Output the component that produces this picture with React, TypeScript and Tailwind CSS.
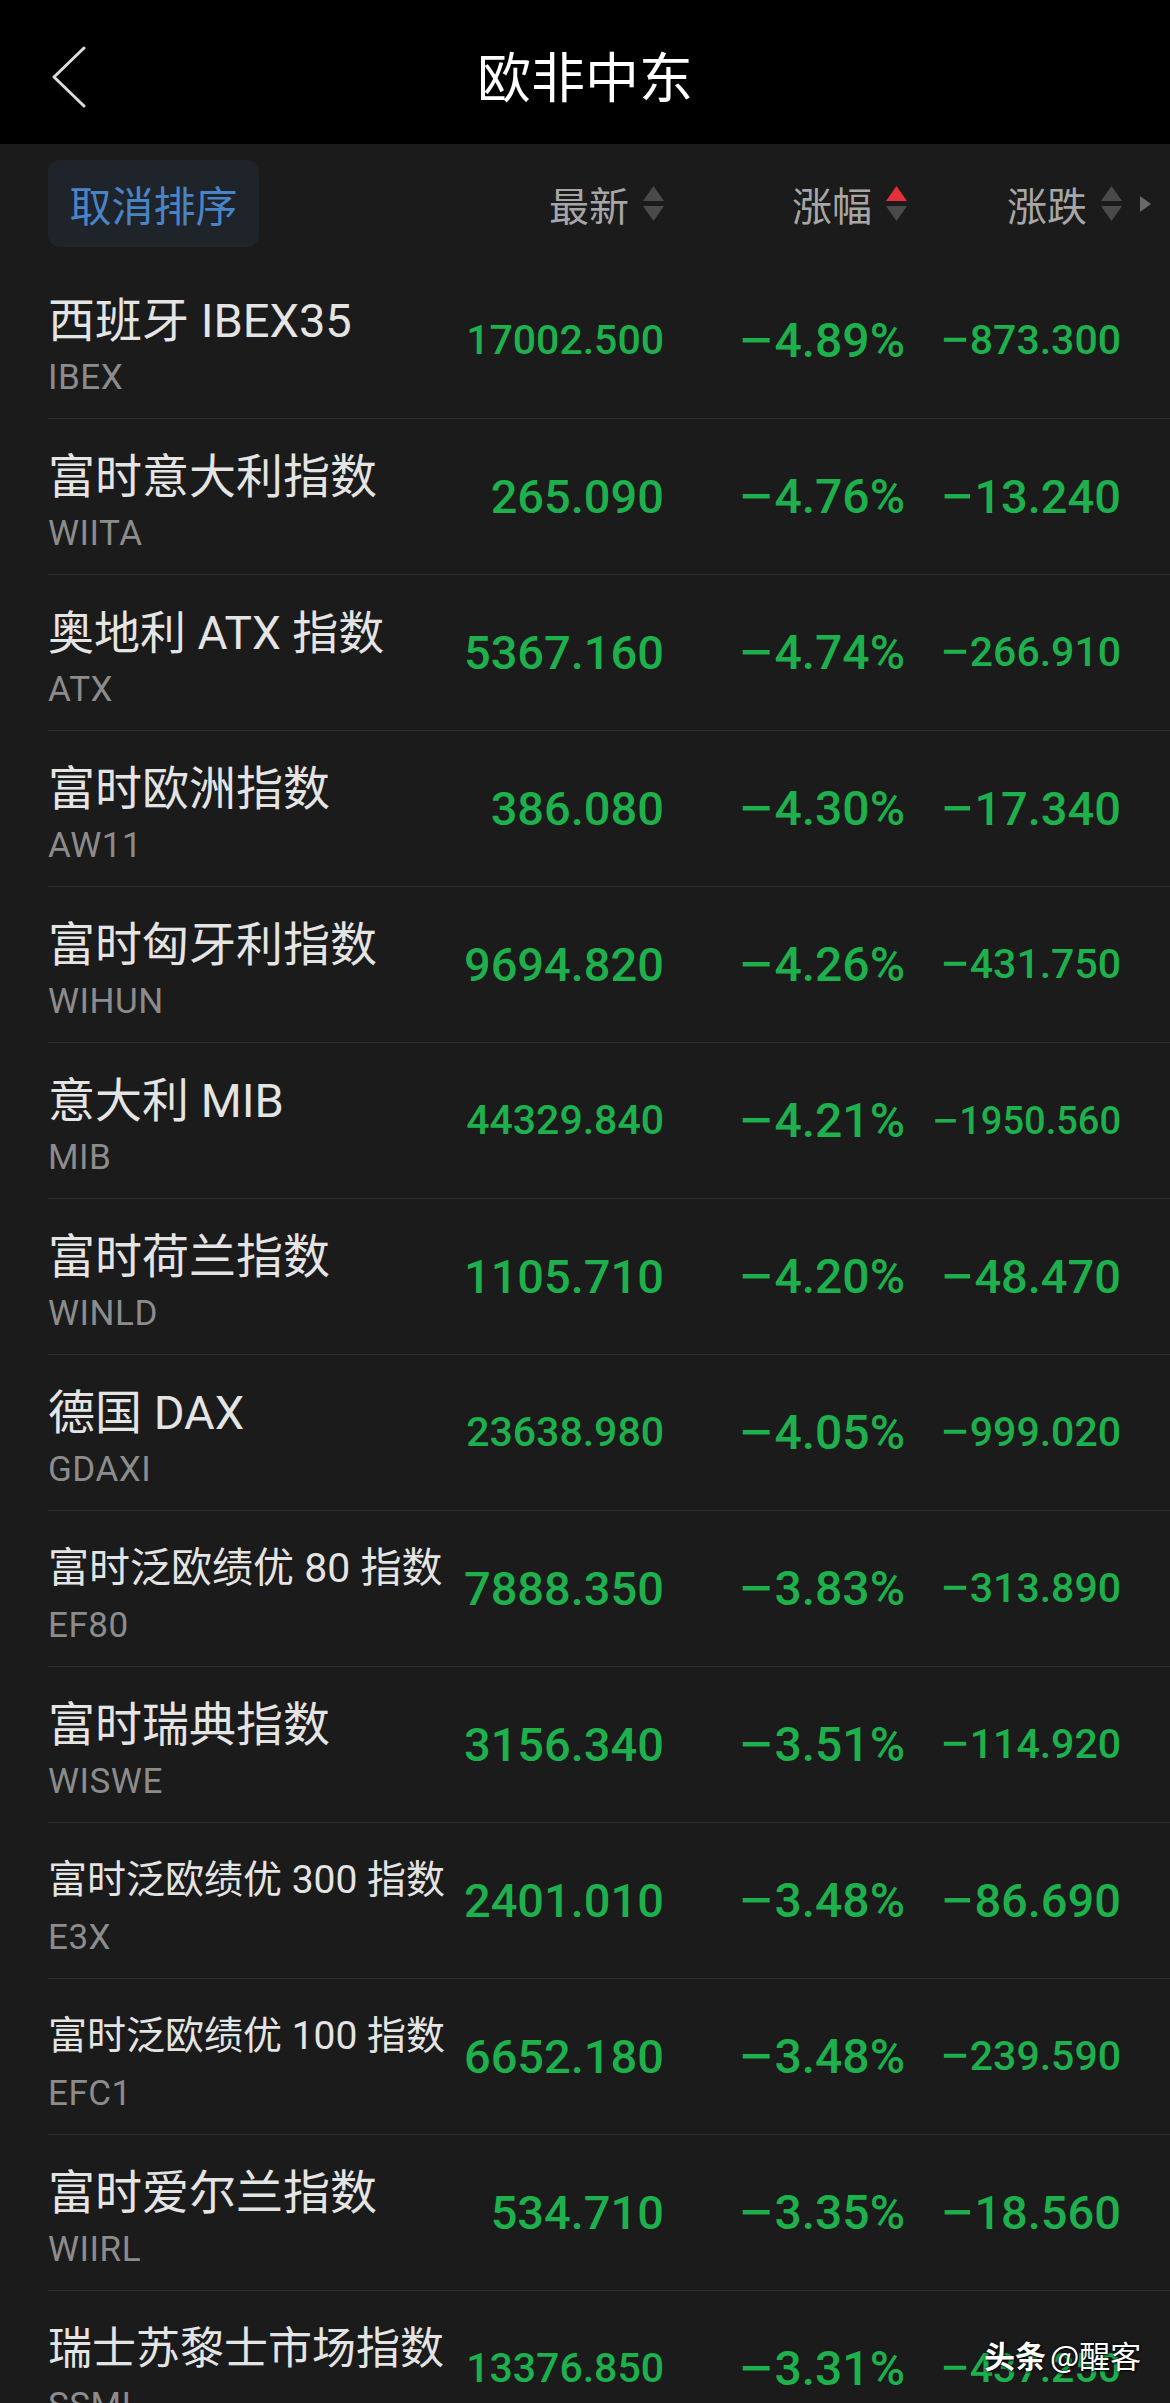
import React from 'react';

type Row = {
  name: string;
  nameCls: string;
  code: string;
  last: string;
  lastCls: string;
  pct: string;
  chg: string;
  chgCls: string;
};

const rows: Row[] = [
  { name: '西班牙 IBEX35', nameCls: 'text-[47px]', code: 'IBEX', last: '17002.500', lastCls: 'text-[41px]', pct: '4.89%', chg: '873.300', chgCls: 'text-[41px]' },
  { name: '富时意大利指数', nameCls: 'text-[47px]', code: 'WIITA', last: '265.090', lastCls: 'text-[47px]', pct: '4.76%', chg: '13.240', chgCls: 'text-[47px]' },
  { name: '奥地利 ATX 指数', nameCls: 'text-[46px]', code: 'ATX', last: '5367.160', lastCls: 'text-[47px]', pct: '4.74%', chg: '266.910', chgCls: 'text-[41px]' },
  { name: '富时欧洲指数', nameCls: 'text-[47px]', code: 'AW11', last: '386.080', lastCls: 'text-[47px]', pct: '4.30%', chg: '17.340', chgCls: 'text-[47px]' },
  { name: '富时匈牙利指数', nameCls: 'text-[47px]', code: 'WIHUN', last: '9694.820', lastCls: 'text-[47px]', pct: '4.26%', chg: '431.750', chgCls: 'text-[41px]' },
  { name: '意大利 MIB', nameCls: 'text-[47px]', code: 'MIB', last: '44329.840', lastCls: 'text-[41px]', pct: '4.21%', chg: '1950.560', chgCls: 'text-[38px]' },
  { name: '富时荷兰指数', nameCls: 'text-[47px]', code: 'WINLD', last: '1105.710', lastCls: 'text-[47px]', pct: '4.20%', chg: '48.470', chgCls: 'text-[47px]' },
  { name: '德国 DAX', nameCls: 'text-[47px]', code: 'GDAXI', last: '23638.980', lastCls: 'text-[41px]', pct: '4.05%', chg: '999.020', chgCls: 'text-[41px]' },
  { name: '富时泛欧绩优 80 指数', nameCls: 'text-[41px]', code: 'EF80', last: '7888.350', lastCls: 'text-[47px]', pct: '3.83%', chg: '313.890', chgCls: 'text-[41px]' },
  { name: '富时瑞典指数', nameCls: 'text-[47px]', code: 'WISWE', last: '3156.340', lastCls: 'text-[47px]', pct: '3.51%', chg: '114.920', chgCls: 'text-[41px]' },
  { name: '富时泛欧绩优 300 指数', nameCls: 'text-[39px]', code: 'E3X', last: '2401.010', lastCls: 'text-[47px]', pct: '3.48%', chg: '86.690', chgCls: 'text-[47px]' },
  { name: '富时泛欧绩优 100 指数', nameCls: 'text-[39px]', code: 'EFC1', last: '6652.180', lastCls: 'text-[47px]', pct: '3.48%', chg: '239.590', chgCls: 'text-[41px]' },
  { name: '富时爱尔兰指数', nameCls: 'text-[47px]', code: 'WIIRL', last: '534.710', lastCls: 'text-[47px]', pct: '3.35%', chg: '18.560', chgCls: 'text-[47px]' },
  { name: '瑞士苏黎士市场指数', nameCls: 'text-[44px]', code: 'SSMI', last: '13376.850', lastCls: 'text-[41px]', pct: '3.31%', chg: '437.250', chgCls: 'text-[41px]' },
];

function SortArrows({ upActive = false }: { upActive?: boolean }) {
  return (
    <svg width="21" height="35" viewBox="0 0 21 35" className="ml-[14px] shrink-0">
      <polygon points="0,15 10.5,0 21,15" fill={upActive ? '#e3303a' : '#4a4a4a'} />
      <polygon points="0,20 21,20 10.5,35" fill="#4a4a4a" />
    </svg>
  );
}

export default function App() {
  return (
    <div className="relative h-[2403px] w-[1170px] overflow-hidden bg-[#1b1b1b] font-['Roboto','Noto_Sans_CJK_SC',sans-serif]">
      {/* Top nav */}
      <div className="grid h-[144px] grid-cols-[1fr_auto_1fr] items-center bg-black">
        <div className="flex items-center">
          <svg width="36" height="62" viewBox="0 0 36 62" className="ml-[51px] mt-[10px]">
            <polyline points="33,2 3,31 33,60" fill="none" stroke="#dcdcdc" strokeWidth="3" strokeLinecap="round" strokeLinejoin="round" />
          </svg>
        </div>
        <div className="mt-[5px] font-['Noto_Sans_CJK_SC',sans-serif] text-[54px] leading-none text-white">欧非中东</div>
        <div />
      </div>

      {/* Sort bar */}
      <div className="ml-[48px] flex h-[119px] items-start pt-[16px]">
        <div className="w-[400px] shrink-0">
          <div className="flex h-[87px] w-[211px] items-center justify-center rounded-[12px] bg-[#1f232a] font-['Noto_Sans_CJK_SC',sans-serif] text-[42px] leading-none text-[#4a84c8]">
            取消排序
          </div>
        </div>
        <div className="flex h-[87px] w-[216px] shrink-0 items-center justify-end font-['Noto_Sans_CJK_SC',sans-serif] text-[40px] leading-none text-[#a6a6a6]">
          <span>最新</span>
          <SortArrows />
        </div>
        <div className="flex h-[87px] w-[243px] shrink-0 items-center justify-end font-['Noto_Sans_CJK_SC',sans-serif] text-[40px] leading-none text-[#a6a6a6]">
          <span>涨幅</span>
          <SortArrows upActive />
        </div>
        <div className="flex h-[87px] w-[215px] shrink-0 items-center justify-end font-['Noto_Sans_CJK_SC',sans-serif] text-[40px] leading-none text-[#a6a6a6]">
          <span>涨跌</span>
          <SortArrows />
        </div>
        <div className="flex h-[87px] items-center pl-[18px]">
          <svg width="11" height="16" viewBox="0 0 11 16">
            <polygon points="0,0 11,8 0,16" fill="#6a6a6a" />
          </svg>
        </div>
      </div>

      {/* Rows */}
      <div className="flex flex-col">
        {rows.map((r) => (
          <div key={r.code} className="ml-[48px] flex h-[156px] shrink-0 border-b border-[#2e2e2e]">
            <div className="flex w-[400px] shrink-0 flex-col pt-[34px]">
              <div className={`flex h-[47px] items-center whitespace-nowrap leading-none text-[#e4e4e4] ${r.nameCls}`}>{r.name}</div>
              <div className="mt-[16px] text-[35px] leading-none tracking-[0.5px] text-[#8c8c8c]">{r.code}</div>
            </div>
            <div className={`flex w-[216px] shrink-0 items-center justify-end whitespace-nowrap font-medium leading-none text-[#1db04c] ${r.lastCls}`}>
              {r.last}
            </div>
            <div className="flex w-[241px] shrink-0 items-center justify-end whitespace-nowrap font-medium text-[48px] leading-none text-[#1db04c]">
              <span className="inline-block origin-right scale-x-[1.35]">−</span>
              <span>{r.pct}</span>
            </div>
            <div className={`flex w-[216px] shrink-0 items-center justify-end whitespace-nowrap font-medium leading-none text-[#1db04c] ${r.chgCls}`}>
              <span className="inline-block origin-right scale-x-[1.3]">−</span>
              <span>{r.chg}</span>
            </div>
          </div>
        ))}
      </div>

      {/* Watermark */}
      <div className="absolute left-[984px] top-[2339px] whitespace-nowrap font-['Noto_Sans_CJK_SC',sans-serif] text-[31px] leading-none text-white [text-shadow:0_0_3px_rgba(0,0,0,0.9),1px_1px_2px_rgba(0,0,0,0.9)]">
        <span className="font-bold">头条</span>
        <span className="ml-[4px]">@醒客</span>
      </div>
    </div>
  );
}
